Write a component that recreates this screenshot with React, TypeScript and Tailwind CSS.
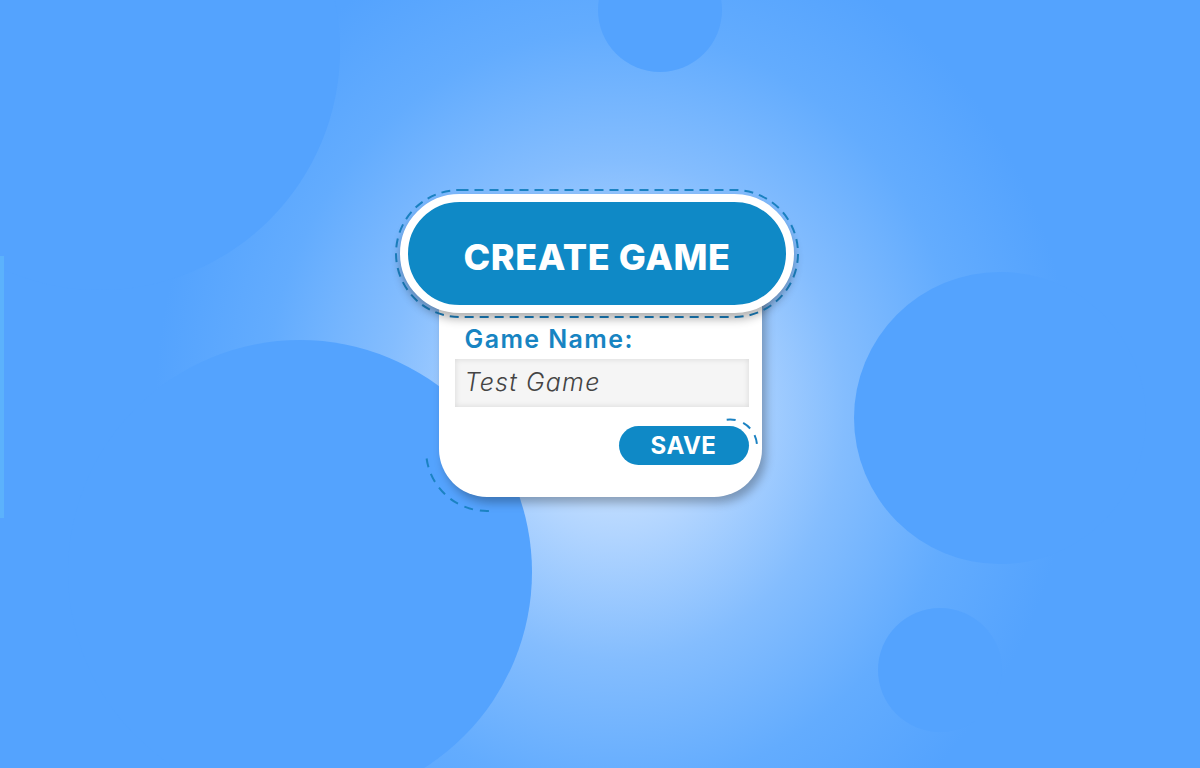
import React from 'react';

const App: React.FC = () => {
  return (
    <div className="relative w-full h-[768px] overflow-hidden bg-[#54a3fe] bg-[radial-gradient(ellipse_460px_500px_at_615px_410px,#dcecff_0%,#b2d5ff_25%,#84bdfe_50%,#63acfe_76%,#54a3fe_100%)] font-['Inter',sans-serif]">
      {/* background blobs */}
      <div className="absolute left-[-140px] top-[-190px] w-[480px] h-[480px] rounded-full bg-[#54a3fe]" />
      <div className="absolute left-[598px] top-[-52px] w-[124px] h-[124px] rounded-full bg-[#54a3fe]" />
      <div className="absolute left-[68px] top-[340px] w-[464px] h-[464px] rounded-full bg-[#54a3fe]" />
      <div className="absolute left-[854px] top-[272px] w-[292px] h-[292px] rounded-full bg-[#54a3fe]" />
      <div className="absolute left-[878px] top-[608px] w-[124px] h-[124px] rounded-full bg-[#54a3fe]" />
      <div className="absolute left-0 top-[256px] w-[4px] h-[262px] bg-[#5cb2fc]" />

      <div className="relative flex flex-col items-center pt-[194px]">
        {/* title pill */}
        <div className="relative z-10 -ml-[6px]">
          <svg
            className="absolute -left-[5px] -top-[5px] overflow-visible"
            width="404"
            height="130"
          >
            <rect
              x="1"
              y="1"
              width="402"
              height="127"
              rx="63.5"
              fill="none"
              stroke="#1b82c2"
              strokeWidth="2"
              strokeDasharray="9 6"
            />
          </svg>
          <div className="relative w-[394px] h-[119px] rounded-full border-[8px] border-white bg-[#0f89c6] shadow-[0_6px_10px_rgba(0,0,0,0.3)] flex items-center justify-center pt-[6px]">
            <span className="text-white text-[36px] font-extrabold tracking-[0.6px]">
              CREATE GAME
            </span>
          </div>
        </div>

        {/* form card */}
        <div className="relative -mt-[20px] w-[323px] bg-white rounded-b-[48px] shadow-[4px_6px_10px_rgba(0,0,0,0.28)] pt-[31px] pb-[32px] pl-[16px] pr-[13px]">
          <svg className="absolute left-0 top-0 w-full h-full overflow-visible pointer-events-none">
            <path
              d="M -12.4 165.5 A 61 61 0 0 0 53.3 217.8"
              fill="none"
              stroke="#1b82c2"
              strokeWidth="2"
              strokeDasharray="9 7"
            />
            <path
              d="M 287.7 126.7 A 27 27 0 0 1 318 152"
              fill="none"
              stroke="#1b82c2"
              strokeWidth="2"
              strokeDasharray="9 8"
            />
          </svg>
          <div className="pl-[10px] text-[25px] leading-[30px] font-semibold tracking-[1.4px] text-[#1784c2]">
            Game Name:
          </div>
          <div className="mt-[5px] w-[294px] h-[48px] bg-[#f5f5f5] shadow-[inset_0_0_6px_rgba(0,0,0,0.12)] flex items-center pl-[10px]">
            <span className="text-[25px] italic font-light tracking-[1.2px] text-[#444444]">Test Game</span>
          </div>
          <div className="mt-[19px] flex justify-end">
            <button className="w-[130px] h-[39px] rounded-full bg-[#0f89c6] text-white text-[24px] font-bold tracking-[0.5px] flex items-center justify-center">
              SAVE
            </button>
          </div>
        </div>
      </div>
    </div>
  );
};

export default App;
